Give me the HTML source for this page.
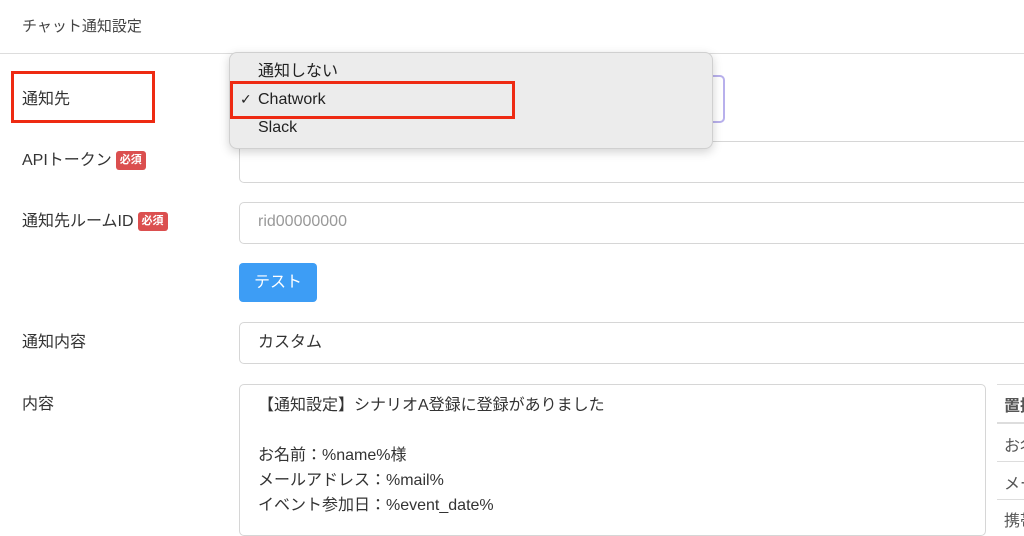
<!DOCTYPE html>
<html><head><meta charset="utf-8"><style>
body{margin:0;width:1024px;height:515px;overflow:hidden;background:#fff;font-family:"Liberation Sans","Noto Sans CJK JP",sans-serif;color:#333;position:relative;font-size:16px}
.a{position:absolute;white-space:nowrap}
.lbl{position:absolute;left:22px;font-size:16px;color:#333;line-height:20px;white-space:nowrap}
.inp{position:absolute;left:239px;right:-10px;border:1px solid #d6d6d6;border-radius:5px;background:#fff}
.badge{display:inline-block;background:#db4f4f;color:#fff;font-size:11px;font-weight:bold;padding:0 4px;height:19px;line-height:19px;border-radius:3px;vertical-align:2px;margin-left:4px}
.txt{position:absolute;left:258px;font-size:16px;line-height:20px}
.tb{position:absolute;left:997px;right:0;overflow:hidden;white-space:nowrap}
</style></head><body>
<div class="a" style="left:22px;top:15px;font-size:15px;color:#444">チャット通知設定</div>
<div class="a" style="left:0;right:0;top:53px;height:1px;background:#ddd"></div>

<div class="lbl" style="top:90px">通知先</div>
<div class="a" style="left:11px;top:71px;width:138px;height:46px;border:3px solid #ee2a12"></div>
<div class="a" style="left:239px;top:75px;width:482px;height:44px;border:2px solid #b8b0ec;border-radius:5px"></div>

<div class="lbl" style="top:151px">APIトークン<span class="badge">必須</span></div>
<div class="inp" style="top:141px;height:40px"></div>
<div class="lbl" style="top:212px">通知先ルームID<span class="badge">必須</span></div>
<div class="inp" style="top:202px;height:40px"></div>
<div class="txt" style="top:212px;color:#999">rid00000000</div>

<div class="a" style="left:239px;top:263px;width:78px;height:39px;background:#3d9df5;border-radius:4px;color:#fff;font-size:16px;line-height:39px;text-align:center">テスト</div>

<div class="lbl" style="top:333px">通知内容</div>
<div class="inp" style="top:322px;height:40px"></div>
<div class="txt" style="top:333px">カスタム</div>

<div class="lbl" style="top:395px">内容</div>
<div class="a" style="left:239px;top:384px;width:745px;height:150px;border:1px solid #d6d6d6;border-radius:5px"></div>
<div class="a" style="left:258px;top:393px;line-height:25px;font-size:16px;white-space:pre">【通知設定】シナリオA登録に登録がありました

お名前：%name%様
メールアドレス：%mail%
イベント参加日：%event_date%</div>
<div class="a" style="left:997px;top:384px;right:0;height:1px;background:#ddd"></div>
<div class="tb" style="top:392px;font-weight:bold;color:#555;padding-left:7px">置換</div>
<div class="a" style="left:997px;top:422px;right:0;height:2px;background:#ddd"></div>
<div class="tb" style="top:432px;color:#555;padding-left:7px">お名前</div>
<div class="a" style="left:997px;top:461px;right:0;height:1px;background:#ddd"></div>
<div class="tb" style="top:470px;color:#555;padding-left:7px">メール</div>
<div class="a" style="left:997px;top:499px;right:0;height:1px;background:#ddd"></div>
<div class="tb" style="top:507px;color:#555;padding-left:7px">携帯</div>

<div class="a" style="left:229px;top:52px;width:482px;height:95px;background:#ececec;border:1px solid #d0d0d0;border-radius:8px;box-shadow:0 3px 10px rgba(0,0,0,.18)"></div>
<div class="a" style="left:258px;top:62px;font-size:16px;color:#222;line-height:20px">通知しない</div>
<div class="a" style="left:240px;top:90px;font-size:16px;color:#222;line-height:20px;font-family:'DejaVu Sans',sans-serif;font-weight:bold;font-size:14px">✓</div>
<div class="a" style="left:258px;top:90px;font-size:16px;color:#222;line-height:20px">Chatwork</div>
<div class="a" style="left:258px;top:118px;font-size:16px;color:#222;line-height:20px">Slack</div>
<div class="a" style="left:230px;top:81px;width:279px;height:32px;border:3px solid #ee2a12"></div>
</body></html>
